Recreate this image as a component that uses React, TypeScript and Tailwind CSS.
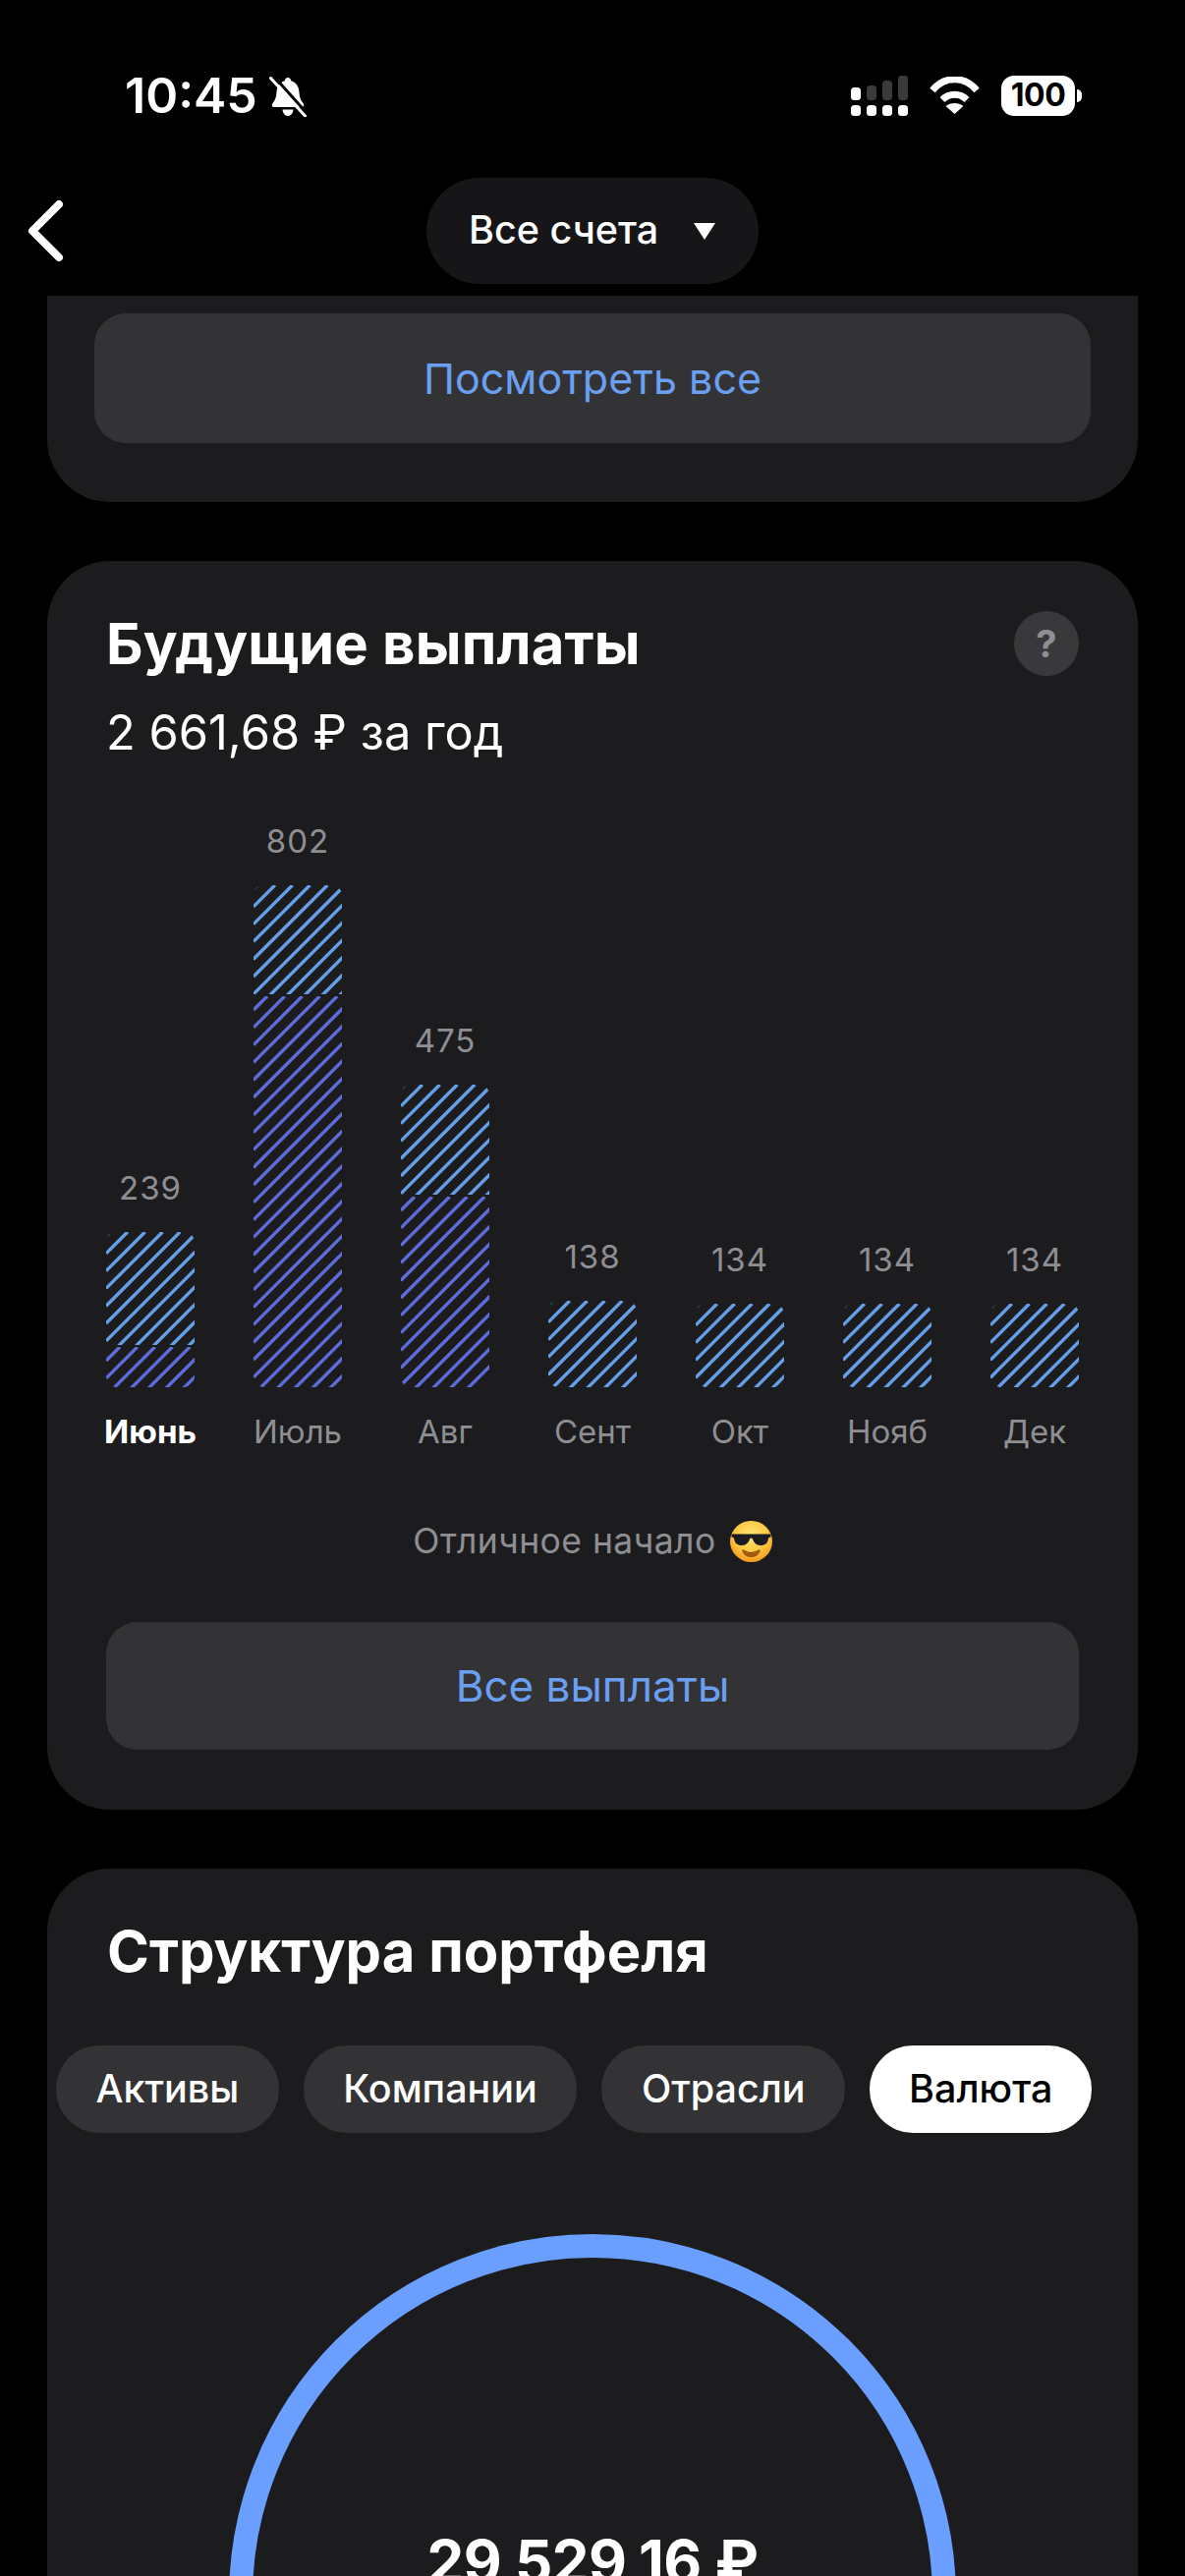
const months = [
  { name: "Июнь", value: "239", blue: 115, purple: 41, active: true },
  { name: "Июль", value: "802", blue: 111, purple: 398 },
  { name: "Авг", value: "475", blue: 112, purple: 194 },
  { name: "Сент", value: "138", blue: 88, purple: 0 },
  { name: "Окт", value: "134", blue: 85, purple: 0 },
  { name: "Нояб", value: "134", blue: 85, purple: 0 },
  { name: "Дек", value: "134", blue: 85, purple: 0 },
];

const tabs = ["Активы", "Компании", "Отрасли", "Валюта"];

function Hatch({ height, color, offset, className }: { height: number; color: string; offset: number; className: string }) {
  const lines: number[] = [];
  for (let c = offset; c < 90 + height + 18; c += 17.8) lines.push(c);
  return (
    <svg width={90} height={height} className={className}>
      {lines.map((c) => (
        <line key={c} x1={c} y1={0} x2={0} y2={c} stroke={color} strokeWidth={3.4} />
      ))}
    </svg>
  );
}

function Bar({ blue, purple }: { blue: number; purple: number }) {
  return (
    <div className="flex flex-col gap-[2px]">
      <Hatch
        height={blue}
        color="#659fe8"
        offset={4}
        className={purple ? "block overflow-hidden rounded-t-[10px]" : "block overflow-hidden rounded-[10px]"}
      />
      {purple > 0 && <Hatch height={purple} color="#5d6cd9" offset={14} className="block overflow-hidden rounded-b-[10px]" />}
    </div>
  );
}

function BellSlash() {
  return (
    <svg width="38" height="41" viewBox="0 0 38 41" className="mt-[2px]">
      <path
        d="M19 1c2 0 3 1.500 3.200 3.200C28 5.800 30 10.500 30.500 16c.4 5 1.500 8 4 11 1.500 2 .6 4-1.500 4H5c-2.100 0-3-2-1.500-4 2.500-3 3.600-6 4-11C8 10.500 10 5.800 15.800 4.200 16 2.500 17 1 19 1z"
        fill="#fff"
      />
      <path d="M13.500 33.500h11c-.5 4-2.500 6.500-5.500 6.500s-5-2.500-5.500-6.500z" fill="#fff" />
      <path d="M5 0L39 38" stroke="#000" strokeWidth="3" />
      <path d="M1.500 1.500L36.500 40" stroke="#fff" strokeWidth="3" strokeLinecap="round" />
    </svg>
  );
}

function Signal() {
  return (
    <svg width="58" height="41" viewBox="0 0 58 41">
      <rect x="0" y="12" width="10" height="13" rx="3.500" fill="#fff" />
      <rect x="16" y="10" width="10" height="15" rx="3.500" fill="#3b3b3d" />
      <rect x="32" y="5" width="10" height="20" rx="3.500" fill="#3b3b3d" />
      <rect x="48" y="0" width="10" height="25" rx="3.500" fill="#3b3b3d" />
      {[0, 16, 32, 48].map((x) => (
        <rect key={x} x={x} y="30" width="10" height="11" rx="3.500" fill="#fff" />
      ))}
    </svg>
  );
}

function Wifi() {
  return (
    <svg width="51" height="38" viewBox="0 0 51 38" fill="none">
      <path d="M3 14C15-1 36-1 48 14" stroke="#fff" strokeWidth="7" />
      <path d="M13 23.500C20 16.500 31 16.500 38 23.500" stroke="#fff" strokeWidth="7" />
      <path d="M25.500 38L16.500 30C21.500 26 29.500 26 34.500 30L25.500 38Z" fill="#fff" />
    </svg>
  );
}

function CoolEmoji() {
  return (
    <svg width="43" height="42" viewBox="0 0 43 42" className="shrink-0">
      <defs>
        <radialGradient id="face" cx="50%" cy="35%" r="65%">
          <stop offset="0%" stopColor="#fde67a" />
          <stop offset="60%" stopColor="#fbc93f" />
          <stop offset="100%" stopColor="#f39a1c" />
        </radialGradient>
      </defs>
      <ellipse cx="21.500" cy="21" rx="21.500" ry="21" fill="url(#face)" />
      <path d="M1.500 13.500h40v3c-1 0-2 .5-2.500 1.500-.8 5-3.500 7-8 7-4.500 0-7-3-8-6.500-.6-1.300-2.400-1.300-3 0-1 3.500-3.500 6.500-8 6.500-4.500 0-7.200-2-8-7-.5-1-1.500-1.500-2.500-1.500z" fill="#1b1b22" />
      <path d="M12 29.500c5 5 14 5 19 0-1 5-5 7.500-9.500 7.500s-8.500-2.500-9.500-7.500z" fill="#a4560f" />
      <path d="M13 29.800c5 3.800 12 3.800 17 0" stroke="#7b3e08" strokeWidth="1.200" fill="none" />
    </svg>
  );
}

export default function App() {
  return (
    <div className="flex h-[2622px] w-[1206px] flex-col overflow-hidden bg-black font-['Inter',sans-serif] text-white">
      {/* Status bar */}
      <div className="flex h-[181px] shrink-0 justify-between pl-[127px] pr-[105px] pt-[72px]">
        <div className="flex h-[50px] items-center gap-[12px]">
          <span className="text-[50px] leading-none font-semibold">10:45</span>
          <BellSlash />
        </div>
        <div className="flex h-[50px] items-center gap-[22px]">
          <Signal />
          <Wifi />
          <div className="flex items-center gap-[2px]">
            <div className="flex h-[41px] w-[75px] items-center justify-center rounded-[13px] bg-white text-[32px] leading-none font-bold tracking-[-0.5px] text-black">
              100
            </div>
            <div className="h-[13px] w-[5px] rounded-r-full bg-white" />
          </div>
        </div>
      </div>

      {/* Nav */}
      <div className="grid h-[108px] shrink-0 grid-cols-[1fr_auto_1fr] items-center">
        <svg width="40" height="66" viewBox="0 0 40 66" fill="none" className="ml-[27px]">
          <path d="M33 6L6 33L33 60" stroke="#fff" strokeWidth="8" strokeLinecap="round" strokeLinejoin="round" />
        </svg>
        <div className="flex h-[108px] w-[338px] items-center gap-[36px] rounded-[54px] bg-[#161618] pl-[43px]">
          <span className="text-[39.5px] leading-none font-medium whitespace-nowrap">Все счета</span>
          <span className="h-0 w-0 border-x-[11px] border-t-[17px] border-x-transparent border-t-white" />
        </div>
      </div>

      {/* Cards */}
      <div className="mt-[12px] flex shrink-0 flex-col gap-[60px] px-[48px]">
        <div className="rounded-b-[64px] bg-[#1c1c1e] px-[48px] pt-[18px] pb-[60px]">
          <div className="flex h-[132px] items-center justify-center rounded-[32px] bg-[#333336] text-[43px] leading-none text-[#6a9ff2]">
            Посмотреть все
          </div>
        </div>

        <div className="rounded-[64px] bg-[#1c1c1e] px-[60px] pt-[48px] pb-[61px]">
          <div className="flex items-center justify-between">
            <h2 className="text-[58px] leading-[72px] font-bold tracking-[0.2px]">Будущие выплаты</h2>
            <div className="flex h-[66px] w-[66px] items-center justify-center rounded-full bg-[#39393b] text-[38px] leading-none font-bold text-[#8e8e93]">
              ?
            </div>
          </div>
          <p className="mt-[25px] text-[48.8px] leading-[60px]">2 661,68 ₽ за год</p>

          <div className="mt-[60px] flex items-end justify-between">
            {months.map((m) => (
              <div key={m.name} className="flex w-[90px] flex-col items-center">
                <span className="mb-[25px] text-[33px] leading-[40px] tracking-[1px] text-[#8e8e93]">{m.value}</span>
                <Bar blue={m.blue} purple={m.purple} />
                <span
                  className={
                    m.active
                      ? "mt-[25px] text-[33px] leading-[40px] font-bold text-white whitespace-nowrap"
                      : "mt-[25px] text-[33px] leading-[40px] text-[#8e8e93] whitespace-nowrap"
                  }
                >
                  {m.name}
                </span>
              </div>
            ))}
          </div>

          <div className="mt-[70px] flex h-[44px] items-center justify-center gap-[14px] text-[35.5px] leading-none tracking-[0.45px] text-[#8e8e93]">
            <span>Отличное начало</span>
            <CoolEmoji />
          </div>

          <div className="mt-[60px] flex h-[130px] items-center justify-center rounded-[32px] bg-[#333336] text-[44px] leading-none text-[#6a9ff2]">
            Все выплаты
          </div>
        </div>

        <div className="rounded-t-[64px] bg-[#1c1c1e] pt-[48px]">
          <h2 className="pl-[61px] text-[58px] leading-[72px] font-bold">Структура портфеля</h2>
          <div className="mt-[60px] ml-[9px] flex gap-[25px]">
            {tabs.map((t) => (
              <div
                key={t}
                className={
                  t === "Валюта"
                    ? "flex h-[89px] items-center rounded-[44px] bg-white px-[40px] text-[39.5px] leading-none font-medium text-black"
                    : "flex h-[89px] items-center rounded-[44px] bg-[#333336] px-[40.5px] text-[39.5px] leading-none font-medium text-white"
                }
              >
                {t}
              </div>
            ))}
          </div>
          <div className="relative mx-auto mt-[103px] h-[740px] w-[740px] rounded-full border-[24px] border-[#6a9fff]">
            <div className="absolute inset-x-0 top-[279px] text-center text-[60px] leading-none font-bold tracking-[-0.5px] whitespace-nowrap">
              29 529,16 ₽
            </div>
          </div>
        </div>
      </div>
    </div>
  );
}
